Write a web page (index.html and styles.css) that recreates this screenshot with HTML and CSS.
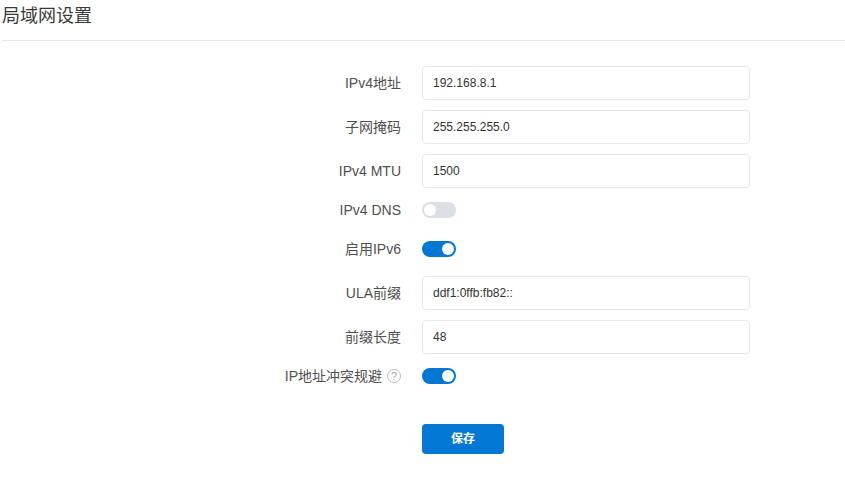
FILE: index.html
```html
<!DOCTYPE html>
<html lang="zh-CN">
<head>
<meta charset="utf-8">
<title>局域网设置</title>
<link rel="stylesheet" href="styles.css">
</head>
<body>
<header class="page-head"><h1 class="page-title">局域网设置</h1></header>
<form class="form">
  <div class="row"><label class="label">IPv4地址</label><input class="input" value="192.168.8.1"></div>
  <div class="row"><label class="label">子网掩码</label><input class="input" value="255.255.255.0"></div>
  <div class="row"><label class="label">IPv4 MTU</label><input class="input" value="1500"></div>
  <div class="row row-switch"><label class="label">IPv4 DNS</label><span class="switch"><span class="knob"></span></span></div>
  <div class="row row-switch"><label class="label">启用IPv6</label><span class="switch on"><span class="knob"></span></span></div>
  <div class="row"><label class="label">ULA前缀</label><input class="input" value="ddf1:0ffb:fb82::"></div>
  <div class="row"><label class="label">前缀长度</label><input class="input" value="48"></div>
  <div class="row row-switch"><label class="label">IP地址冲突规避<span class="help">?</span></label><span class="switch on"><span class="knob"></span></span></div>
  <div class="row row-action"><span class="label"></span><button type="button" class="btn">保存</button></div>
</form>
</body>
</html>
```
FILE: styles.css
```css
* { box-sizing: border-box; }
html, body { margin: 0; padding: 0; background: #fff; }
body {
  width: 845px;
  height: 479px;
  overflow: hidden;
  font-family: "Liberation Sans", "Noto Sans CJK SC", sans-serif;
  color: #4c4c4c;
}
.page-head {
  height: 41px;
  margin: 0 0 0 2px;
  border-bottom: 1px solid #e6e6e6;
}
.page-title {
  margin: 0;
  font-size: 18px;
  font-weight: 400;
  line-height: 33px;
  color: #3a3a3a;
}
.form {
  display: flex;
  flex-direction: column;
  gap: 10px;
  padding-top: 25px;
}
.row { display: flex; align-items: center; gap: 20px; }
.row-switch { height: 24px; margin-bottom: 5px; }
.row-action { margin-top: 21px; }
.label {
  width: 402px;
  padding-right: 1px;
  display: flex;
  justify-content: flex-end;
  align-items: center;
  font-size: 14px;
  line-height: 20px;
  color: #4f4f4f;
}
.input {
  width: 328px;
  height: 34px;
  padding: 0 10px;
  border: 1px solid #e8e8e8;
  border-radius: 4px;
  font: 12px "Liberation Sans", "Noto Sans CJK SC", sans-serif;
  color: #333;
  background: #fff;
  outline: none;
}
.switch {
  width: 34px;
  height: 16px;
  display: flex;
  padding: 2px;
  border-radius: 8px;
  background: #dcdfe6;
}
.switch.on { background: #0277d3; justify-content: flex-end; }
.knob { width: 12px; height: 12px; border-radius: 50%; background: #fff; }
.help {
  width: 14px;
  height: 14px;
  margin-left: 5px;
  display: flex;
  align-items: center;
  justify-content: center;
  border: 1px solid #bdbdbd;
  border-radius: 50%;
  font-size: 11px;
  line-height: 1;
  color: #a6a6a6;
}
.btn {
  width: 82px;
  height: 30px;
  padding: 0;
  border: 0;
  border-radius: 4px;
  background: #0277d3;
  color: #fff;
  font: 700 12px/28px "Liberation Sans", "Noto Sans CJK SC", sans-serif;
}
```
